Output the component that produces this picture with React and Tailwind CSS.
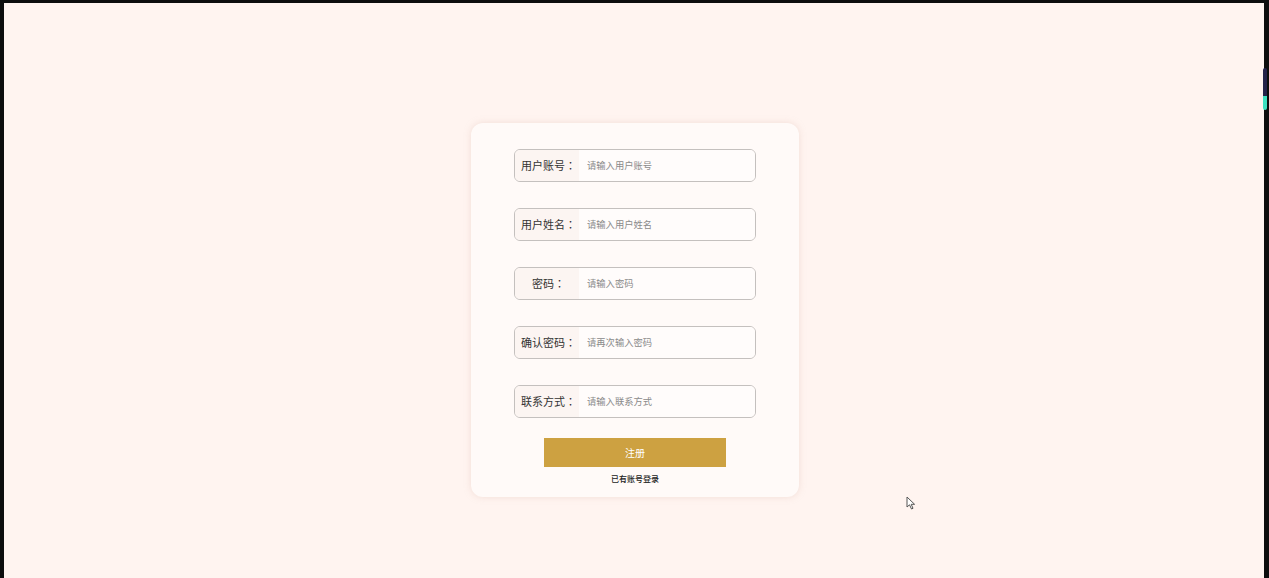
import { useState } from 'react';

const FIELDS = [
  { key: 'account', label: '用户账号', placeholder: '请输入用户账号' },
  { key: 'name', label: '用户姓名', placeholder: '请输入用户姓名' },
  { key: 'password', label: '密码', placeholder: '请输入密码', type: 'password' },
  { key: 'confirm', label: '确认密码', placeholder: '请再次输入密码', type: 'password' },
  { key: 'phone', label: '联系方式', placeholder: '请输入联系方式' },
];

function Field({ label, placeholder, type, value, onChange }) {
  return (
    <div className="flex h-[33px] w-[242px] overflow-hidden rounded-[6px] border border-[#c4c0be]">
      <div className="flex w-[64px] shrink-0 items-center justify-center whitespace-nowrap bg-[#fcf5f2] pl-[3px] text-[11px] text-[#333]">
        {label}
        <span className="font-['Noto_Sans_CJK_JP',sans-serif]">：</span>
      </div>
      <input
        type={type || 'text'}
        className="min-w-0 flex-1 bg-[#fffcfb] pl-[8px] text-[9.3px] text-[#333] outline-none placeholder:text-[#8a8a8a]"
        placeholder={placeholder}
        value={value}
        onChange={e => onChange(e.target.value)}
      />
    </div>
  );
}

export default function App() {
  const [form, setForm] = useState({});

  return (
    <div className="h-[578px] w-full overflow-hidden bg-[#0d0d0d] pl-[4px] pr-[5px] pt-[3px] font-['Noto_Sans_CJK_SC','Noto_Sans',sans-serif]">
      <div className="relative flex h-full flex-col items-center bg-[#fff4f0] pl-[2px] pt-[120px]">
        <div className="flex h-[374px] w-[328px] flex-col items-center rounded-[12px] bg-[#fffaf8] pt-[26px] shadow-[0_0_6px_rgba(230,200,190,0.5)]">
          <div className="flex flex-col gap-[26px]">
            {FIELDS.map(f => (
              <Field
                key={f.key}
                label={f.label}
                placeholder={f.placeholder}
                type={f.type}
                value={form[f.key] || ''}
                onChange={v => setForm({ ...form, [f.key]: v })}
              />
            ))}
          </div>
          <button className="mt-[20px] h-[29px] w-[182px] bg-[#cda141] text-[10px] text-white">注册</button>
          <a className="mt-[6px] cursor-pointer text-[8px] font-medium text-[#222]">已有账号登录</a>
        </div>

        {/* scrollbar thumb */}
        <div className="absolute right-[-3px] top-[65px] flex h-[42px] w-[4px] flex-col overflow-hidden rounded-[2px]">
          <div className="flex-1 bg-[#24234a]" />
          <div className="h-[14px] bg-[#3de0c0]" />
        </div>

        {/* mouse cursor */}
        <svg className="absolute left-[902px] top-[493px]" width="10" height="14" viewBox="0 0 10 14">
          <path d="M1 1 L1 11 L3.5 8.8 L5.5 13 L7 12.3 L5.2 8.3 L8.6 8.3 Z" fill="#fff" stroke="#555" strokeWidth="1" strokeLinejoin="round" />
        </svg>
      </div>
    </div>
  );
}
